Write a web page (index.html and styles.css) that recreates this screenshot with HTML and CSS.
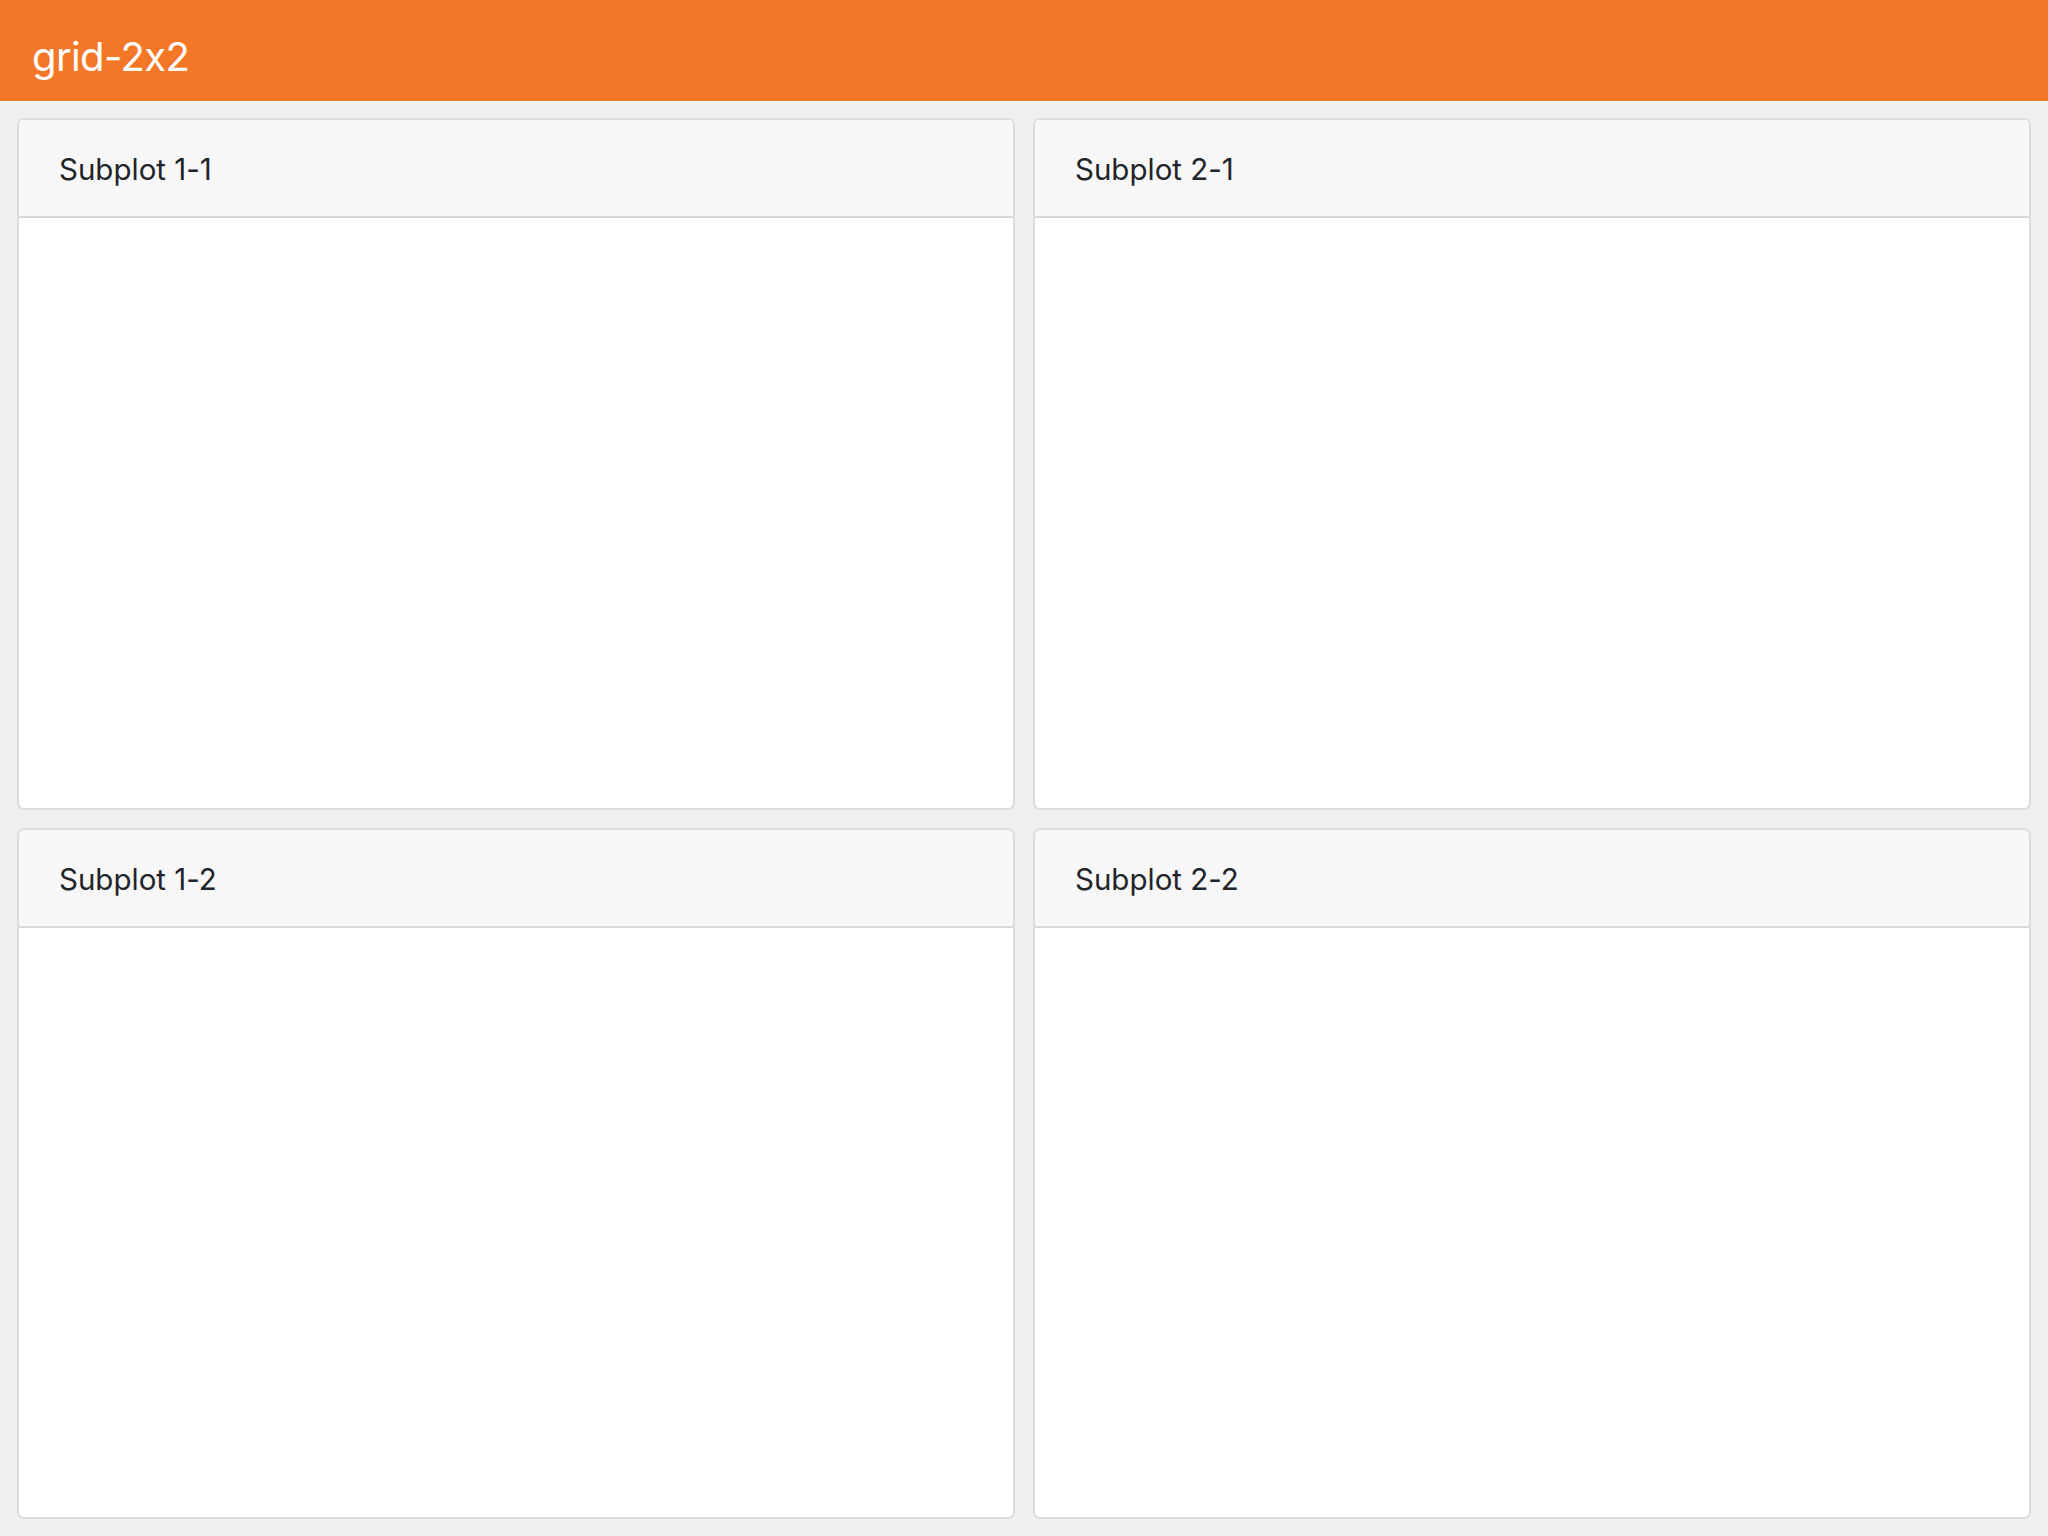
FILE: index.html
```html
<!DOCTYPE html>
<html>
<head>
<meta charset="utf-8">
<link rel="stylesheet" href="styles.css">
</head>
<body>
<header class="topbar"><span class="title">grid-2x2</span></header>
<main class="grid">
  <section class="card"><div class="card-header">Subplot 1-1</div><div class="card-body"></div></section>
  <section class="card"><div class="card-header">Subplot 2-1</div><div class="card-body"></div></section>
  <section class="card"><div class="card-header">Subplot 1-2</div><div class="card-body"></div></section>
  <section class="card"><div class="card-header">Subplot 2-2</div><div class="card-body"></div></section>
</main>
</body>
</html>
```
FILE: styles.css
```css
html, body {
  margin: 0;
  padding: 0;
  height: 100%;
}
body {
  background: #f0f0f0;
  font-family: Inter, "Noto Sans", sans-serif;
  font-feature-settings: "calt" 0;
  color: #212529;
  display: flex;
  flex-direction: column;
}
.topbar {
  height: 101px;
  background: #f47727;
  display: flex;
  align-items: center;
  padding-left: 32px;
  flex: none;
}
.title {
  color: #ffffff;
  font-size: 40px;
  letter-spacing: -0.6px;
  line-height: 1;
  padding-top: 12px;
}
.grid {
  flex: 1;
  min-height: 0;
  display: grid;
  grid-template-columns: 1fr 1fr;
  grid-template-rows: 1fr 1fr;
  gap: 18px;
  padding: 17px 17px 17px 17px;
}
.card {
  background: #ffffff;
  border: 2px solid #dcdcdc;
  border-radius: 7px;
  display: flex;
  flex-direction: column;
  overflow: hidden;
}
.card-header {
  background: #f7f7f7;
  border-bottom: 2px solid #d8d8d8;
  height: 98px;
  box-sizing: border-box;
  padding-left: 40px;
  padding-top: 2px;
  display: flex;
  align-items: center;
  font-size: 29.5px;
  flex: none;
}
.card-body {
  flex: 1;
}
```
